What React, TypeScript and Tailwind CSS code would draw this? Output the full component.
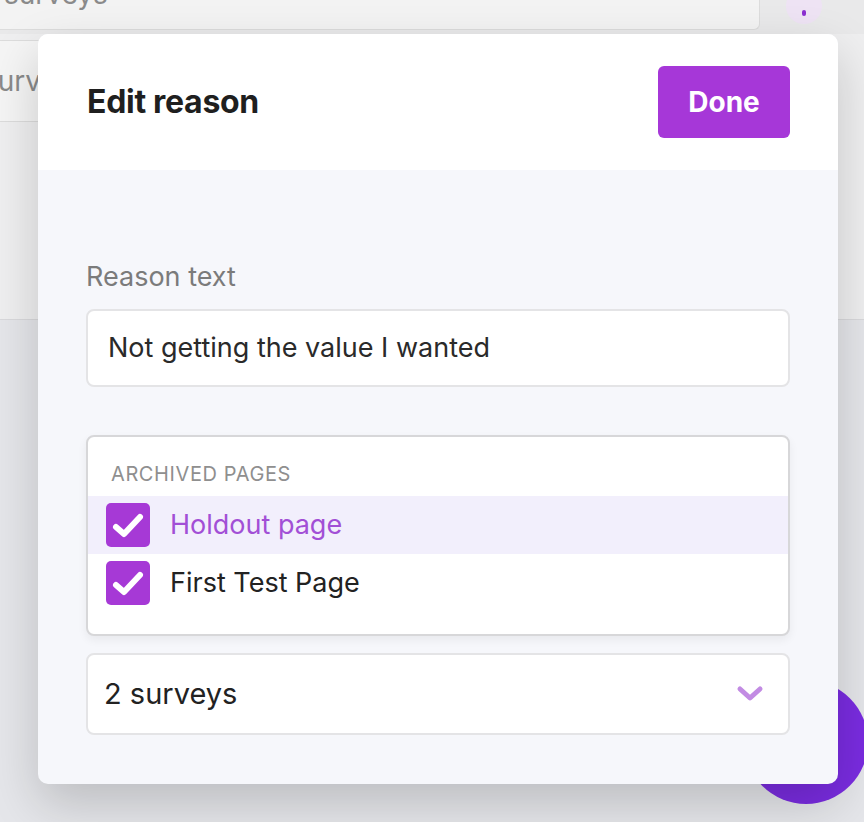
const font = { fontFamily: "Inter, 'Noto Sans', sans-serif" }

const CheckBox = () => (
  <span className="flex h-[44px] w-[44px] shrink-0 items-center justify-center rounded-[5px] bg-[#a639d6]">
    <svg width="44" height="44" viewBox="0 0 44 44" fill="none">
      <path d="M10 24l8 7 16-17" stroke="#fff" strokeWidth="6" strokeLinecap="round" strokeLinejoin="round" />
    </svg>
  </span>
)

const pages = [
  { name: "Holdout page", active: true },
  { name: "First Test Page", active: false },
]

export default function App() {
  return (
    <div className="relative h-[822px] w-[864px] overflow-hidden bg-[#e5e6ea]" style={font}>
      {/* page behind the dialog */}
      <div className="flex h-[320px] flex-col border-b border-[#d9d9dc] bg-[#efeff0]">
        <div className="flex h-[34px] items-start bg-[#e9e9ea]">
          <div className="relative h-[30px] w-[760px] overflow-hidden rounded-br-[6px] border-b border-r border-[#dcdcdc] bg-[#f3f3f3]">
            <span className="absolute left-[4px] top-[-27px] text-[28px] text-[#8a8a8a]">surveys</span>
          </div>
          <div className="ml-[26px] mt-[-12px] flex h-[36px] w-[36px] items-end justify-center rounded-full bg-[#eee3f4]">
            <span className="mb-[8px] h-[6px] w-[4px] rounded-full bg-[#8b2fd0]" />
          </div>
        </div>
        <div className="mt-[6px] flex h-[82px] w-[80px] items-center overflow-hidden border-y border-[#dcdcdc] bg-[#f5f5f5]">
          <span className="ml-[-17px] text-[28px] text-[#8a8a8a]">surv</span>
        </div>
      </div>
      <div className="absolute left-[744px] top-[680px] h-[124px] w-[124px] rounded-full bg-[#7a2ce0]" />

      {/* dialog */}
      <div className="absolute left-[38px] top-[34px] w-[800px] overflow-hidden rounded-[10px] bg-[#f6f7fb] shadow-[0_20px_50px_rgba(0,0,0,0.18)]">
        <div className="flex h-[136px] items-center justify-between bg-white pl-[49px] pr-[48px]">
          <h1 className="text-[32px] font-bold tracking-[-0.3px] text-[#1f1f1f]">Edit reason</h1>
          <button className="h-[72px] w-[132px] rounded-[6px] bg-[#a637d8] text-[28px] font-bold text-white">Done</button>
        </div>
        <div className="flex flex-col px-[48px] pb-[49px] pt-[91px]">
          <label className="text-[27px] leading-[32px] text-[#7b7b7b]">Reason text</label>
          <div className="mt-[16px] flex h-[78px] items-center rounded-[8px] border-2 border-[#e4e4e6] bg-white px-[20px] text-[27px] text-[#2a2a2a]">
            Not getting the value I wanted
          </div>
          <div className="mt-[48px] flex flex-col rounded-[8px] border-2 border-[#d7d7d9] bg-white pb-[22px] pt-[25px] shadow-[0_4px_10px_rgba(0,0,0,0.06)]">
            <div className="px-[23px] pb-[10px] text-[20px] uppercase leading-[24px] tracking-[0.6px] text-[#8f8f8f]">Archived pages</div>
            {pages.map((p) => (
              <div key={p.name} className={`flex h-[58px] items-center gap-[20px] px-[18px] ${p.active ? "bg-[#f2effc]" : ""}`}>
                <CheckBox />
                <span className={`text-[27px] ${p.active ? "text-[#a24fd6]" : "text-[#222]"}`}>{p.name}</span>
              </div>
            ))}
          </div>
          <div className="mt-[17px] flex h-[82px] items-center justify-between rounded-[8px] border-2 border-[#e4e4e6] bg-white pl-[16px] pr-[24px]">
            <span className="text-[29px] text-[#222]">2 surveys</span>
            <svg width="28" height="18" viewBox="0 0 28 18" fill="none">
              <path d="M4 4l10 9 10-9" stroke="#c28be3" strokeWidth="5" strokeLinecap="round" strokeLinejoin="round" />
            </svg>
          </div>
        </div>
      </div>
    </div>
  )
}
